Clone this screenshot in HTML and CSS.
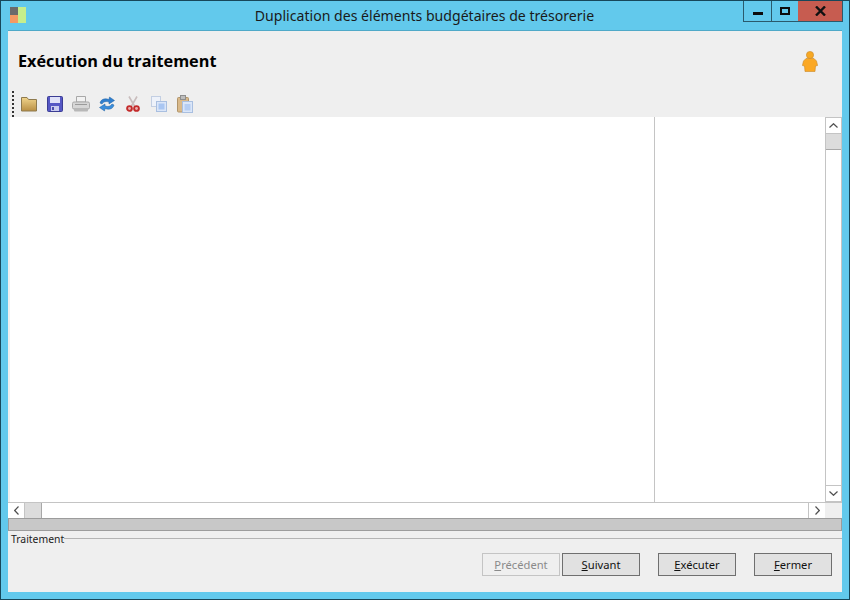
FILE: index.html
```html
<!DOCTYPE html>
<html lang="fr">
<head>
    <meta charset="UTF-8">
    <title>Duplication des éléments budgétaires de trésorerie</title>
    <link rel="stylesheet" href="styles.css">
</head>
<body>
    <div class="window">
        <div class="titlebar">
            <svg class="app-icon" width="16" height="16" viewBox="0 0 16 16">
                <rect x="0" y="0" width="8" height="8" fill="#6b6b6b"/>
                <rect x="0" y="8" width="8" height="8" fill="#f49a63"/>
                <rect x="8" y="0" width="8" height="16" fill="#c6ee8c"/>
            </svg>
            <div class="title">Duplication des éléments budgétaires de trésorerie</div>
            <div class="win-controls">
                <div class="win-btn win-min"><span></span></div>
                <div class="win-btn win-max"><span></span></div>
                <div class="win-btn win-close">
                    <svg width="11" height="10" viewBox="0 0 11 10"><path d="M1 0.5 L10 9.5 M10 0.5 L1 9.5" stroke="#111" stroke-width="2.4"/></svg>
                </div>
            </div>
        </div>

        <div class="content">
            <div class="header">
                <h1>Exécution du traitement</h1>
                <svg class="user-icon" width="16" height="21" viewBox="0 0 16 21">
                    <circle cx="8" cy="4" r="3.6" fill="#f7a823" stroke="#c98a2a" stroke-width="0.6"/>
                    <path d="M4 7.5 H12 L14.5 10 L15.6 14.5 L13.5 15 L13 20.5 H3 L2.5 15 L0.4 14.5 L1.5 10 Z" fill="#fba824" stroke="#c98a2a" stroke-width="0.6"/>
                </svg>
            </div>

            <div class="toolbar">
                <div class="grip"></div>
                <div class="tool-btn">
                    <!-- folder -->
                    <svg width="16" height="16" viewBox="0 0 16 16">
                        <defs>
                            <linearGradient id="folderFill" x1="0" y1="0" x2="0" y2="1">
                                <stop offset="0" stop-color="#f0d48c"/>
                                <stop offset="1" stop-color="#b98f43"/>
                            </linearGradient>
                        </defs>
                        <path d="M0.5 1.5 H6 L7.5 3.5 H15.5 V15 H0.5 Z" fill="url(#folderFill)" stroke="#8e7a4e"/>
                    </svg>
                </div>
                <div class="tool-btn">
                    <!-- floppy -->
                    <svg width="16" height="16" viewBox="0 0 16 16">
                        <rect x="0.5" y="0.5" width="15" height="15" rx="1" fill="#5557c4" stroke="#3b3d94"/>
                        <rect x="3" y="1" width="10" height="6" fill="#dfe1f8"/>
                        <rect x="4" y="10" width="8" height="5" fill="#c9cbee"/>
                        <rect x="5" y="11" width="2" height="3" fill="#4a4cac"/>
                    </svg>
                </div>
                <div class="tool-btn">
                    <!-- printer -->
                    <svg width="18" height="16" viewBox="0 0 18 16">
                        <path d="M4.5 0.5 H13.5 V6 H4.5 Z" fill="#f2f2f2" stroke="#a8a8a8"/>
                        <rect x="0.5" y="6" width="17" height="7" rx="1.5" fill="#d6d6d6" stroke="#a9a9a9"/>
                        <rect x="2" y="12" width="14" height="3.5" rx="1" fill="#b8b8b8"/>
                        <rect x="3" y="8" width="12" height="1" fill="#9a9a9a"/>
                    </svg>
                </div>
                <div class="tool-btn">
                    <!-- refresh -->
                    <svg width="16" height="16" viewBox="0 0 16 16">
                        <path d="M1 7 C2 3 6 2 10 3.5 L10.5 1 L15.5 4.5 L10 8 L10 6 C7 5 4.5 5.5 3 8 Z" fill="#2f7fcf" stroke="#1b5c9f" stroke-width="0.5"/>
                        <path d="M15 9 C14 13 10 14 6 12.5 L5.5 15 L0.5 11.5 L6 8 L6 10 C9 11 11.5 10.5 13 8 Z" fill="#3a8edc" stroke="#1b5c9f" stroke-width="0.5"/>
                    </svg>
                </div>
                <div class="tool-btn">
                    <!-- scissors -->
                    <svg width="14" height="16" viewBox="0 0 14 16">
                        <path d="M3 0.5 L8.5 10 M11 0.5 L5.5 10" stroke="#c9bdbd" stroke-width="1.6" fill="none"/>
                        <circle cx="3.5" cy="12.5" r="2.4" fill="#e8b0b0" stroke="#c32b2b" stroke-width="1.9"/>
                        <circle cx="10.5" cy="12.5" r="2.4" fill="#e8b0b0" stroke="#c32b2b" stroke-width="1.9"/>
                    </svg>
                </div>
                <div class="tool-btn">
                    <!-- copy -->
                    <svg width="16" height="16" viewBox="0 0 16 16">
                        <rect x="0.5" y="0.5" width="9" height="10" fill="#eef2fa" stroke="#c3cfe3"/>
                        <rect x="5.5" y="5.5" width="10" height="10" fill="#dbe6f8" stroke="#a9bfe0"/>
                        <rect x="7.5" y="7.5" width="6" height="6" fill="#a9c6f2"/>
                    </svg>
                </div>
                <div class="tool-btn">
                    <!-- paste -->
                    <svg width="16" height="18" viewBox="0 0 16 18">
                        <rect x="0.5" y="2.5" width="11" height="14.5" rx="1" fill="#d9b98a" stroke="#b0946a"/>
                        <rect x="3.5" y="0.5" width="5" height="4" fill="#bdbdbd" stroke="#8e8e8e"/>
                        <rect x="5.5" y="6.5" width="10" height="11" fill="#dbe6f8" stroke="#a9bfe0"/>
                        <rect x="7.5" y="9" width="6" height="6.5" fill="#b5cdf3"/>
                    </svg>
                </div>
            </div>

            <div class="grid-area">
                <div class="grid-main">
                    <div class="grid-cells">
                        <div class="col-main"></div>
                        <div class="col-side"></div>
                    </div>
                    <div class="vscroll">
                        <div class="scroll-arrow">
                            <svg width="9" height="5" viewBox="0 0 9 5"><path d="M0.5 4.5 L4.5 0.7 L8.5 4.5" fill="none" stroke="#505050" stroke-width="1.2"/></svg>
                        </div>
                        <div class="vthumb"></div>
                        <div class="scroll-track"></div>
                        <div class="scroll-arrow">
                            <svg width="9" height="5" viewBox="0 0 9 5"><path d="M0.5 0.5 L4.5 4.3 L8.5 0.5" fill="none" stroke="#505050" stroke-width="1.2"/></svg>
                        </div>
                    </div>
                </div>
                <div class="hscroll">
                    <div class="scroll-arrow harrow harrow-left">
                        <svg width="5" height="9" viewBox="0 0 5 9"><path d="M4.5 0.5 L0.7 4.5 L4.5 8.5" fill="none" stroke="#505050" stroke-width="1.2"/></svg>
                    </div>
                    <div class="hthumb"></div>
                    <div class="scroll-track"></div>
                    <div class="scroll-arrow harrow harrow-right">
                        <svg width="5" height="9" viewBox="0 0 5 9"><path d="M0.5 0.5 L4.3 4.5 L0.5 8.5" fill="none" stroke="#505050" stroke-width="1.2"/></svg>
                    </div>
                    <div class="scroll-corner"></div>
                </div>
            </div>

            <div class="progress"></div>

            <div class="group">
                <div class="legend">
                    <span>Traitement</span>
                    <div class="legend-line"></div>
                </div>
                <div class="buttons">
                    <button class="btn btn-disabled"><u>P</u>récédent</button>
                    <button class="btn"><u>S</u>uivant</button>
                    <button class="btn btn-gap"><u>E</u>xécuter</button>
                    <button class="btn btn-gap"><u>F</u>ermer</button>
                </div>
            </div>
        </div>
    </div>
</body>
</html>
```

FILE: styles.css
```css
* {
    margin: 0;
    padding: 0;
    box-sizing: border-box;
}

body {
    font-family: "Open Sans", "Noto Sans", sans-serif;
    background: #62c9ec;
    overflow: hidden;
}

.window {
    width: 850px;
    height: 600px;
    border: 1px solid #17475a;
    background: #62c9ec;
    display: flex;
    flex-direction: column;
}

/* title bar */
.titlebar {
    height: 29px;
    display: flex;
    align-items: flex-start;
    position: relative;
    flex-shrink: 0;
}

.app-icon {
    margin: 6px 0 0 9px;
}

.title {
    position: absolute;
    left: 0;
    right: 1px;
    top: 6px;
    text-align: center;
    font-family: "Noto Sans", sans-serif;
    font-size: 14.1px;
    line-height: 18px;
    color: #1a1a1a;
}

.win-controls {
    margin-left: auto;
    margin-right: 6px;
    display: flex;
    height: 21px;
    border: 1px solid #2a5a6c;
    border-top: none;
}

.win-btn {
    display: flex;
    align-items: center;
    justify-content: center;
}

.win-min {
    width: 28px;
    border-right: 1px solid #2a5a6c;
}

.win-min span {
    display: block;
    width: 10px;
    height: 3px;
    background: #0c0c0c;
    margin-top: 5px;
}

.win-max {
    width: 26px;
}

.win-max span {
    display: block;
    width: 10px;
    height: 8px;
    border: 2px solid #0c0c0c;
}

.win-close {
    width: 44px;
    background: #c75c50;
}

/* content */
.content {
    flex: 1;
    margin: 0 7px 7px;
    background: #efefef;
    display: flex;
    flex-direction: column;
    border-top: 1px solid #4fa9c8;
    min-height: 0;
}

.header {
    height: 57px;
    display: flex;
    align-items: flex-start;
    justify-content: space-between;
    padding: 19px 24px 0 10px;
    flex-shrink: 0;
}

.header h1 {
    font-family: "Open Sans", sans-serif;
    font-size: 16.25px;
    line-height: 22px;
    font-weight: 700;
    color: #000;
}

.user-icon {
    margin-top: 1px;
}

.toolbar {
    height: 29px;
    display: flex;
    padding-left: 4px;
    flex-shrink: 0;
}

.grip {
    width: 2px;
    margin: 3px 2px 0 0;
    border-left: 2px dotted #333;
}

.tool-btn {
    width: 26px;
    display: flex;
    align-items: center;
    justify-content: center;
    padding-top: 2px;
}

.grid-area {
    flex: 1;
    display: flex;
    flex-direction: column;
    min-height: 0;
}

.grid-main {
    flex: 1;
    display: flex;
    min-height: 0;
}

.grid-cells {
    flex: 1;
    display: flex;
    margin-left: 2px;
    background: #fff;
}

.col-main {
    width: 645px;
    border-right: 1px solid #c4c4c4;
}

.col-side {
    flex: 1;
}

.vscroll {
    width: 17px;
    display: flex;
    flex-direction: column;
    background: #fff;
    border-left: 1px solid #c4c4c4;
    border-right: 1px solid #c4c4c4;
}

.scroll-arrow {
    height: 17px;
    background: #fff;
    border-top: 1px solid #c4c4c4;
    border-bottom: 1px solid #c4c4c4;
    display: flex;
    align-items: center;
    justify-content: center;
    flex-shrink: 0;
}

.vthumb {
    height: 16px;
    background: #dcdcdc;
    border-bottom: 1px solid #a8a8a8;
    flex-shrink: 0;
}

.scroll-track {
    flex: 1;
}

.hscroll {
    height: 16px;
    display: flex;
    background: #fff;
    border-top: 1px solid #c4c4c4;
    flex-shrink: 0;
}

.harrow {
    width: 17px;
    height: auto;
    border: none;
}

.harrow-left {
    border-right: 1px solid #c4c4c4;
}

.harrow-right {
    border-left: 1px solid #c4c4c4;
}

.hthumb {
    width: 17px;
    background: #dcdcdc;
    border-right: 1px solid #a8a8a8;
}

.scroll-corner {
    width: 17px;
    background: #efefef;
}

.progress {
    height: 13px;
    background: #c8c8c8;
    border: 1px solid #9c9c9c;
    flex-shrink: 0;
}

/* bottom group */
.group {
    height: 61px;
    flex-shrink: 0;
    display: flex;
    flex-direction: column;
    font-family: "Noto Sans", sans-serif;
}

.legend {
    height: 14px;
    display: flex;
    align-items: center;
    margin-top: 1px;
    padding-left: 3px;
    font-size: 10.4px;
    color: #222;
}

.legend-line {
    flex: 1;
    height: 1px;
    background: #b4b4b4;
    margin-top: -1px;
}

.buttons {
    display: flex;
    justify-content: flex-end;
    padding: 7px 10px 0 0;
    gap: 2px;
}

.btn {
    width: 78px;
    height: 23px;
    font-family: "Noto Sans", sans-serif;
    font-size: 11.2px;
    color: #111;
    background: #e1e1e1;
    border: 1px solid #6f6f6f;
}

.btn-gap {
    margin-left: 16px;
}

.btn-disabled {
    color: #8a8a8a;
    background: #efefef;
    border-color: #c4c4c4;
}
```
